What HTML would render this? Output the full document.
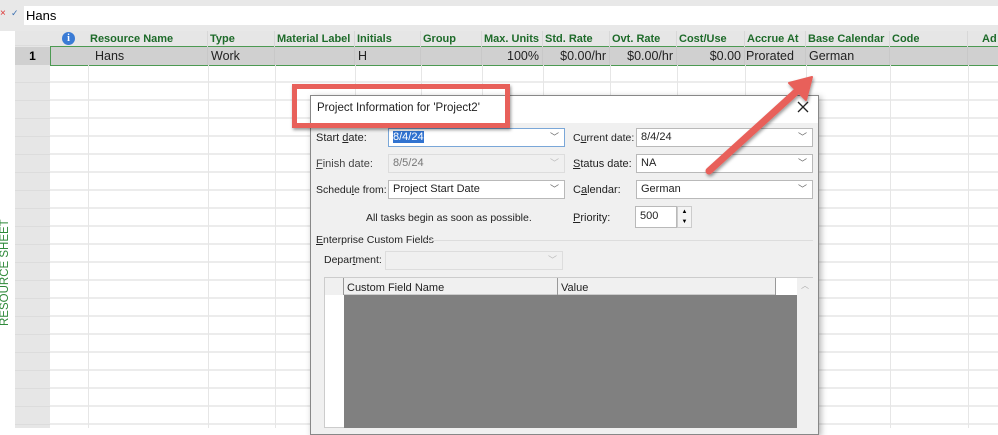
<!DOCTYPE html>
<html><head><style>
*{margin:0;padding:0;box-sizing:border-box}
body{width:998px;height:428px;overflow:hidden;background:#fff;font-family:"Liberation Sans",sans-serif;position:relative}
.a{position:absolute}
.h{position:absolute;top:31px;height:16px;font-size:11px;font-weight:bold;color:#1e6b2a;line-height:17px;padding-left:2px;white-space:nowrap;border-right:1px solid #d8d8d8;overflow:hidden}
.c{position:absolute;top:47px;height:18px;font-size:12.5px;color:#222;line-height:18px;white-space:nowrap;padding:0 3px;border-right:1px solid #c8c8c8}
.vl{position:absolute;top:65px;bottom:0;width:1px;background:#e6e6e6}
.lb{position:absolute;font-size:11px;color:#222;line-height:14px;white-space:nowrap}
.in{position:absolute;height:19px;background:#fff;border:1px solid #b9b9b9;font-size:11px;line-height:17px;padding-left:4px;color:#222}
.dd{position:absolute;right:5px;top:0;font-size:9px;color:#666}
</style></head><body>
<div class="a" style="left:0;top:0;width:998px;height:31px;background:#e8e8e8"></div>
<div class="a" style="left:24px;top:6px;width:974px;height:19px;background:#fff;font-size:13px;line-height:19px;padding-left:2px">Hans</div>
<div class="a" style="left:0;top:8px;font-size:10px;color:#d33">×</div>
<div class="a" style="left:11px;top:8px;font-size:9px;color:#3a6fb0">✓</div>
<div class="a" style="left:15px;top:31px;width:35px;height:397px;background:#e6e6e6;background-image:repeating-linear-gradient(#e6e6e6 0 17px,#dcdcdc 17px 18px);background-position:0 34px"></div>
<div class="a" style="left:0;top:31px;width:15px;height:397px;background:#fff"></div>
<div class="a" style="left:-45px;top:270px;width:100px;transform:rotate(-90deg);font-size:11.5px;color:#2f8a3a;text-align:center;white-space:nowrap">RESOURCE SHEET</div>
<div class="a" style="left:50px;top:65px;width:948px;height:363px;background-image:repeating-linear-gradient(#fff 0 16px,#ececec 16px 18px)"></div>
<div class="a" style="left:50px;top:31px;width:948px;height:16px;background:#e6e6e6"></div>
<div class="a" style="left:15px;top:47px;width:983px;height:18px;background:#d0d0d0"></div>
<div class="a" style="left:50px;top:46px;width:948px;height:20px;border:1px solid #4c9a52;border-right:none"></div>
<div class="a" style="left:15px;top:47px;width:35px;font-size:12px;font-weight:bold;text-align:center;line-height:18px">1</div>
<div class="vl" style="left:88px"></div><div class="vl" style="left:208px"></div><div class="vl" style="left:275px"></div><div class="vl" style="left:355px"></div><div class="vl" style="left:421px"></div><div class="vl" style="left:482px"></div><div class="vl" style="left:543px"></div><div class="vl" style="left:610px"></div><div class="vl" style="left:677px"></div><div class="vl" style="left:745px"></div><div class="vl" style="left:806px"></div><div class="vl" style="left:890px"></div><div class="vl" style="left:968px"></div>
<div class="a" style="left:62px;top:32px;width:13px;height:13px;border-radius:50%;background:#3a7bd5;color:#fff;font-size:10px;font-weight:bold;text-align:center;line-height:13px;font-family:'Liberation Serif',serif">i</div>
<div class="h" style="left:88px;width:120px">Resource Name</div>
<div class="h" style="left:208px;width:67px">Type</div>
<div class="h" style="left:275px;width:80px">Material Label</div>
<div class="h" style="left:355px;width:66px">Initials</div>
<div class="h" style="left:421px;width:61px">Group</div>
<div class="h" style="left:482px;width:61px">Max. Units</div>
<div class="h" style="left:543px;width:67px">Std. Rate</div>
<div class="h" style="left:610px;width:67px">Ovt. Rate</div>
<div class="h" style="left:677px;width:68px">Cost/Use</div>
<div class="h" style="left:745px;width:61px">Accrue At</div>
<div class="h" style="left:806px;width:84px">Base Calendar</div>
<div class="h" style="left:890px;width:78px">Code</div>
<div class="h" style="left:980px;width:30px;border:none">Ad</div>
<div class="c" style="left:88px;width:120px;padding-left:7px">Hans</div>
<div class="c" style="left:208px;width:67px">Work</div>
<div class="c" style="left:275px;width:80px"></div>
<div class="c" style="left:355px;width:66px">H</div>
<div class="c" style="left:421px;width:61px"></div>
<div class="c" style="left:482px;width:61px;text-align:right">100%</div>
<div class="c" style="left:543px;width:67px;text-align:right">$0.00/hr</div>
<div class="c" style="left:610px;width:67px;text-align:right">$0.00/hr</div>
<div class="c" style="left:677px;width:68px;text-align:right">$0.00</div>
<div class="c" style="left:745px;width:61px;padding-left:1px">Prorated</div>
<div class="c" style="left:806px;width:84px">German</div>
<div class="c" style="left:890px;width:78px"></div>
<div class="a" style="left:310px;top:95px;width:509px;height:340px;background:#f0f0f0;border:1px solid #888;box-shadow:2px 2px 6px rgba(0,0,0,.3)"></div>
<div class="a" style="left:311px;top:96px;width:507px;height:27px;background:#fff"></div>
<div class="a" style="left:317px;top:102px;font-size:11.5px;color:#222">Project Information for 'Project2'</div>
<svg class="a" style="left:797px;top:101px" width="12" height="12"><path d="M1 1L11 11M11 1L1 11" stroke="#222" stroke-width="1.3"/></svg>
<div class="lb" style="left:316px;top:131px">Start <u>d</u>ate:</div>
<div class="in" style="left:388px;top:128px;width:177px;border-color:#7aa7d8"><span style="background:#3173d0;color:#fff">8/4/24</span><span class="dd">﹀</span></div>
<div class="lb" style="left:316px;top:157px;color:#444"><u>F</u>inish date:</div>
<div class="in" style="left:388px;top:154px;width:177px;background:#f0f0f0;border-color:#ddd;color:#777">8/5/24<span class="dd" style="color:#bbb">﹀</span></div>
<div class="lb" style="left:316px;top:183px;font-size:10.5px">Schedu<u>l</u>e from:</div>
<div class="in" style="left:388px;top:180px;width:177px">Project Start Date<span class="dd">﹀</span></div>
<div class="lb" style="left:366px;top:211px;font-size:10.5px">All tasks begin as soon as possible.</div>
<div class="lb" style="left:573px;top:131px;font-size:10.5px">C<u>u</u>rrent date:</div>
<div class="in" style="left:636px;top:128px;width:177px">8/4/24<span class="dd">﹀</span></div>
<div class="lb" style="left:573px;top:157px"><u>S</u>tatus date:</div>
<div class="in" style="left:636px;top:154px;width:177px">NA<span class="dd">﹀</span></div>
<div class="lb" style="left:573px;top:183px">C<u>a</u>lendar:</div>
<div class="in" style="left:636px;top:180px;width:177px">German<span class="dd">﹀</span></div>
<div class="lb" style="left:573px;top:211px"><u>P</u>riority:</div>
<div class="in" style="left:635px;top:206px;width:42px;height:22px;line-height:18px">500</div>
<div class="a" style="left:677px;top:206px;width:15px;height:22px;border:1px solid #ccc;background:#f4f4f4;font-size:6px;text-align:center;line-height:10px">▲<br>▼</div>
<div class="lb" style="left:316px;top:233px;font-size:10.5px"><u>E</u>nterprise Custom Fields</div>
<div class="a" style="left:424px;top:240px;width:389px;height:1px;background:#ddd"></div>
<div class="lb" style="left:324px;top:253px;font-size:10.5px">Depar<u>t</u>ment:</div>
<div class="in" style="left:385px;top:251px;width:178px;background:#f0f0f0;border-color:#ddd"><span class="dd" style="color:#bbb">﹀</span></div>
<div class="a" style="left:324px;top:277px;width:489px;height:151px;background:#fff;border:1px solid #ccc"></div>
<div class="a" style="left:797px;top:278px;width:16px;height:150px;background:#f0f0f0;font-size:8px;color:#aaa;text-align:center;line-height:16px">︿</div>
<div class="a" style="left:325px;top:278px;width:19px;height:17px;background:#f0f0f0;border-right:1px solid #999"></div>
<div class="a" style="left:344px;top:278px;width:431px;height:17px;background:#f0f0f0;border-bottom:1px solid #ccc"></div>
<div class="a" style="left:557px;top:278px;width:1px;height:17px;background:#999"></div>
<div class="a" style="left:775px;top:278px;width:1px;height:17px;background:#999"></div>
<div class="lb" style="left:347px;top:281px">Custom Field Name</div>
<div class="lb" style="left:561px;top:281px">Value</div>
<div class="a" style="left:344px;top:295px;width:453px;height:133px;background:#808080"></div>
<div class="a" style="left:292px;top:84px;width:218px;height:44px;border:5px solid #e8605a;box-shadow:1px 2px 3px rgba(0,0,0,.4)"></div>
<svg class="a" style="left:0;top:0" width="998" height="428"><defs><filter id="s"><feDropShadow dx="1" dy="2" stdDeviation="1.5" flood-opacity=".4"/></filter></defs>
<g filter="url(#s)" fill="#e8605a" stroke="#e8605a"><line x1="709" y1="171" x2="796" y2="92" stroke-width="7" stroke-linecap="round"/><polygon points="812,77 789,83 806,100" stroke-width="2" stroke-linejoin="round"/></g></svg>
</body></html>
